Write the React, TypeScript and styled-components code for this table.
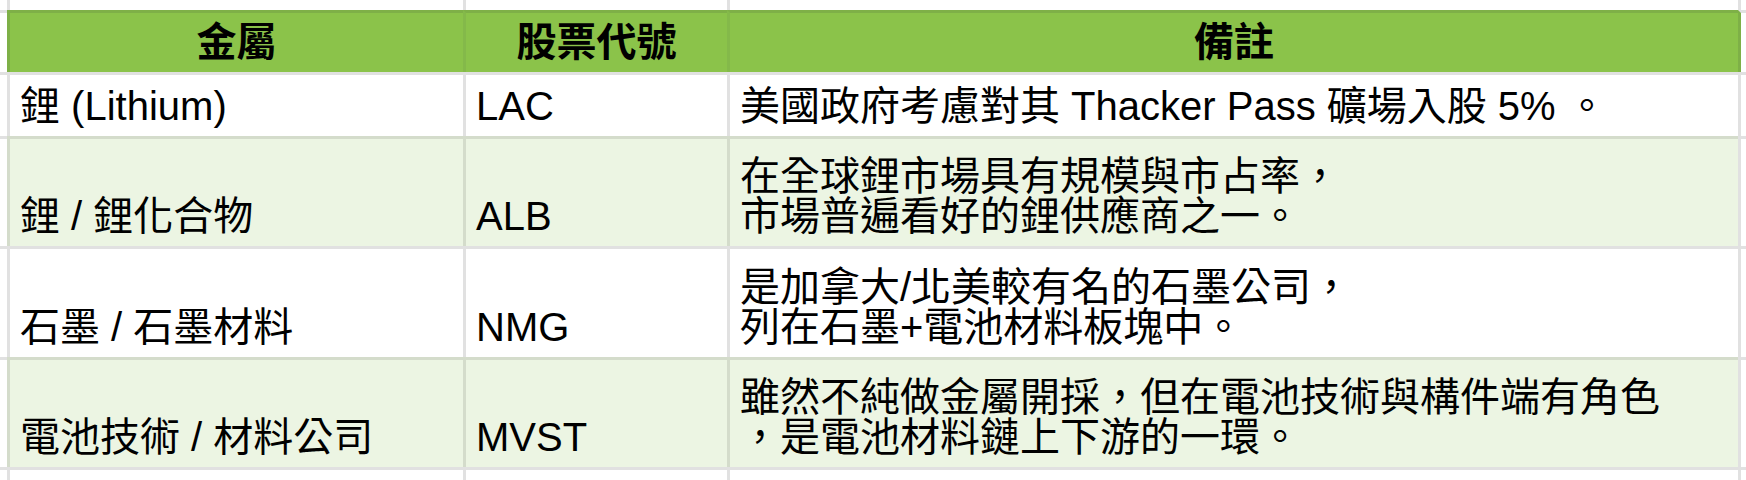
import React from "react";
import styled, { createGlobalStyle } from "styled-components";

type Band = "strip" | "header" | "white" | "green" | "end";

const GlobalStyle = createGlobalStyle`
  html, body {
    margin: 0;
    padding: 0;
    background: #ffffff;
  }
  body {
    font-family: "Liberation Sans", Arial, "Noto Sans CJK TC", sans-serif;
    color: #000000;
  }
`;

const GRAY = "#e1e1e1";
const GREEN_LINE = "#d4dccb";
const HEAD_EDGE = "#7eb047";
const HEAD_SEP = "#84b94a";

const bgFor = (b: Band) =>
  b === "header" ? "#8bc34a" : b === "green" ? "#ecf5e3" : "#ffffff";

const topLineFor = (b: Band) =>
  b === "header" ? HEAD_EDGE : b === "green" ? GREEN_LINE : GRAY;

const heightFor = (b: Band) =>
  b === "strip" ? "10px" : b === "header" ? "62px" : b === "end" ? "13px" : "auto";

const Sheet = styled.div`
  width: 1746px;
  height: 480px;
  overflow: hidden;
  display: flex;
  flex-direction: column;
`;

const Row = styled.div<{ $band: Band; $h?: number }>`
  display: grid;
  grid-template-columns: 7px 456px 264px 1011px 1fr;
  height: ${(p) => (p.$h ? `${p.$h}px` : heightFor(p.$band))};
  flex-shrink: 0;
`;

const Gutter = styled.div<{ $band: Band; $side: "left" | "right" }>`
  background: #ffffff;
  border-top: ${(p) => (p.$band === "strip" ? "none" : `3px solid ${GRAY}`)};
  border-left: ${(p) =>
    p.$side === "left"
      ? "none"
      : `3px solid ${p.$band === "header" ? HEAD_EDGE : GRAY}`};
`;

const Cell = styled.div<{ $band: Band; $first?: boolean; $center?: boolean }>`
  background: ${(p) => bgFor(p.$band)};
  border-top: ${(p) => (p.$band === "strip" ? "none" : `3px solid ${topLineFor(p.$band)}`)};
  border-left: 3px solid
    ${(p) =>
      p.$band === "header"
        ? p.$first
          ? HEAD_EDGE
          : HEAD_SEP
        : p.$band === "green"
        ? GREEN_LINE
        : GRAY};
  padding: 0 10px 10px 10px;
  display: flex;
  flex-direction: column;
  justify-content: flex-end;
  align-items: ${(p) => (p.$center ? "center" : "flex-start")};
  font-size: 40px;
  line-height: 40px;
  font-weight: ${(p) => (p.$band === "header" ? 700 : 400)};
  white-space: nowrap;
  overflow: hidden;
`;

const Line = styled.div`
  white-space: nowrap;
`;

interface DataRow {
  metal: string;
  ticker: string;
  note: string[];
  band: Band;
  h: number;
}

const rows: DataRow[] = [
  {
    metal: "鋰 (Lithium)",
    ticker: "LAC",
    note: ["美國政府考慮對其 Thacker Pass 礦場入股 5% 。"],
    band: "white",
    h: 64,
  },
  {
    metal: "鋰 / 鋰化合物",
    ticker: "ALB",
    note: ["在全球鋰市場具有規模與市占率，", "市場普遍看好的鋰供應商之一。"],
    band: "green",
    h: 110,
  },
  {
    metal: "石墨 / 石墨材料",
    ticker: "NMG",
    note: ["是加拿大/北美較有名的石墨公司，", "列在石墨+電池材料板塊中。"],
    band: "white",
    h: 111,
  },
  {
    metal: "電池技術 / 材料公司",
    ticker: "MVST",
    note: ["雖然不純做金屬開採，但在電池技術與構件端有角色", "，是電池材料鏈上下游的一環。"],
    band: "green",
    h: 110,
  },
];

const EmptyRow: React.FC<{ band: Band }> = ({ band }) => (
  <Row $band={band}>
    <Gutter $band={band} $side="left" />
    <Cell $band={band} />
    <Cell $band={band} />
    <Cell $band={band} />
    <Gutter $band={band} $side="right" />
  </Row>
);

export default function App() {
  return (
    <>
      <GlobalStyle />
      <Sheet>
        <EmptyRow band="strip" />
        <Row $band="header">
          <Gutter $band="header" $side="left" />
          <Cell $band="header" $first $center>
            金屬
          </Cell>
          <Cell $band="header" $center>
            股票代號
          </Cell>
          <Cell $band="header" $center>
            備註
          </Cell>
          <Gutter $band="header" $side="right" />
        </Row>
        {rows.map((r) => (
          <Row key={r.ticker} $band={r.band} $h={r.h}>
            <Gutter $band={r.band} $side="left" />
            <Cell $band={r.band}>{r.metal}</Cell>
            <Cell $band={r.band}>{r.ticker}</Cell>
            <Cell $band={r.band}>
              {r.note.map((l) => (
                <Line key={l}>{l}</Line>
              ))}
            </Cell>
            <Gutter $band={r.band} $side="right" />
          </Row>
        ))}
        <EmptyRow band="end" />
      </Sheet>
    </>
  );
}
